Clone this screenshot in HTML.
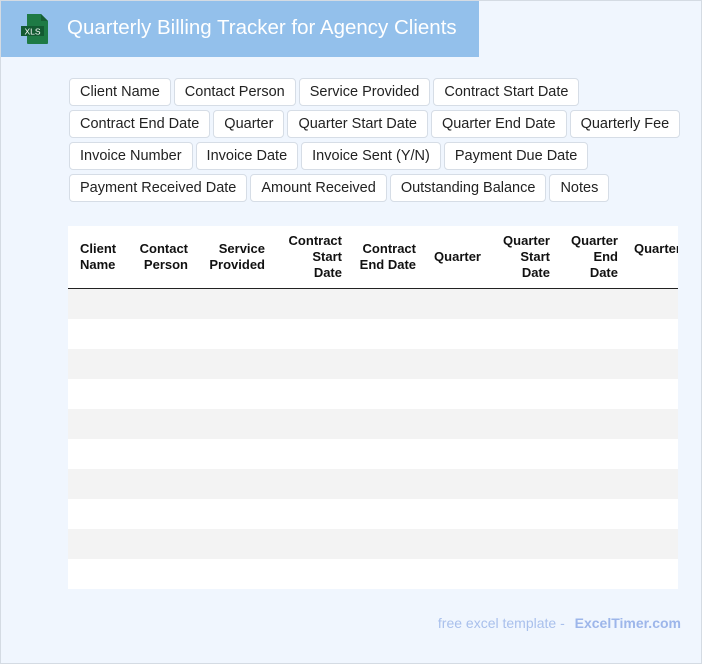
<!DOCTYPE html>
<html><head><style>
*{margin:0;padding:0;box-sizing:border-box}
body{width:702px;height:664px;background:#f0f6fe;font-family:"Liberation Sans",sans-serif;position:relative;overflow:hidden}
.bd{position:absolute;left:0;top:0;width:702px;height:664px;border:1px solid #d4dbe3;pointer-events:none}
.hdr{position:absolute;left:0;top:0;width:479px;height:57px;background:#93c0eb}
.ttl{position:absolute;left:67px;top:16px;font-size:20.5px;color:#fff}
.chips{position:absolute;left:69px;top:78px;width:620px}
.row{display:flex;gap:3px;margin-bottom:4px}
.chip{height:28px;line-height:26px;padding:0 10px;background:#fff;border:1px solid #d6dde6;border-radius:4px;font-size:14.5px;color:#222;white-space:nowrap}
.tbl{position:absolute;left:68px;top:226px;width:610px;height:363px;background:#fff;overflow:hidden}
.th{position:absolute;font-size:13px;font-weight:bold;line-height:16px;text-align:right;color:#111}
.line{position:absolute;left:0;top:62px;width:610px;height:1.5px;background:#222}
.r{position:absolute;left:0;width:610px;height:30px}
.foot{position:absolute;right:21px;top:615px;font-size:14px;color:#a9c0ec}
.foot b{color:#9db6ea;margin-left:6px}
</style></head><body>
<div class="hdr">
<svg style="position:absolute;left:19px;top:13px" width="34" height="32" viewBox="0 0 34 32">
<path d="M8 1h14l7 7v22a1 1 0 0 1-1 1H9a1 1 0 0 1-1-1z" fill="#1e7a45"/>
<path d="M22 1v7h7z" fill="#165e34"/>
<rect x="2" y="13" width="23" height="10" fill="#135a32"/>
<text x="13.5" y="21.5" font-size="8.5" fill="#fff" text-anchor="middle" font-family="Liberation Sans">XLS</text>
</svg>
<div class="ttl">Quarterly Billing Tracker for Agency Clients</div>
</div>
<div class="chips">
<div class="row"><span class="chip">Client Name</span><span class="chip">Contact Person</span><span class="chip">Service Provided</span><span class="chip">Contract Start Date</span></div>
<div class="row"><span class="chip">Contract End Date</span><span class="chip">Quarter</span><span class="chip">Quarter Start Date</span><span class="chip">Quarter End Date</span><span class="chip">Quarterly Fee</span></div>
<div class="row"><span class="chip">Invoice Number</span><span class="chip">Invoice Date</span><span class="chip">Invoice Sent (Y/N)</span><span class="chip">Payment Due Date</span></div>
<div class="row"><span class="chip">Payment Received Date</span><span class="chip">Amount Received</span><span class="chip">Outstanding Balance</span><span class="chip">Notes</span></div>
</div>
<div class="tbl">
<div class="th" style="top:15px;text-align:left;left:12px;width:60px">Client<br>Name</div>
<div class="th" style="right:490px;top:15px">Contact<br>Person</div>
<div class="th" style="right:413px;top:15px">Service<br>Provided</div>
<div class="th" style="right:336px;top:7px">Contract<br>Start<br>Date</div>
<div class="th" style="right:262px;top:15px">Contract<br>End Date</div>
<div class="th" style="right:197px;top:23px">Quarter</div>
<div class="th" style="right:128px;top:7px">Quarter<br>Start<br>Date</div>
<div class="th" style="right:60px;top:7px">Quarter<br>End<br>Date</div>
<div class="th" style="left:566px;top:15px;text-align:left;white-space:nowrap">Quarterly<br>&nbsp;&nbsp;&nbsp;&nbsp;&nbsp;&nbsp;&nbsp;&nbsp;&nbsp;&nbsp;&nbsp;&nbsp;Fee</div>
<div class="line"></div>
<div class="r" style="top:63px;background:#f3f3f3"></div>
<div class="r" style="top:123px;background:#f3f3f3"></div>
<div class="r" style="top:183px;background:#f3f3f3"></div>
<div class="r" style="top:243px;background:#f3f3f3"></div>
<div class="r" style="top:303px;background:#f3f3f3"></div>
</div>
<div class="foot">free excel template - <b>ExcelTimer.com</b></div>
<div class="bd"></div>
</body></html>
